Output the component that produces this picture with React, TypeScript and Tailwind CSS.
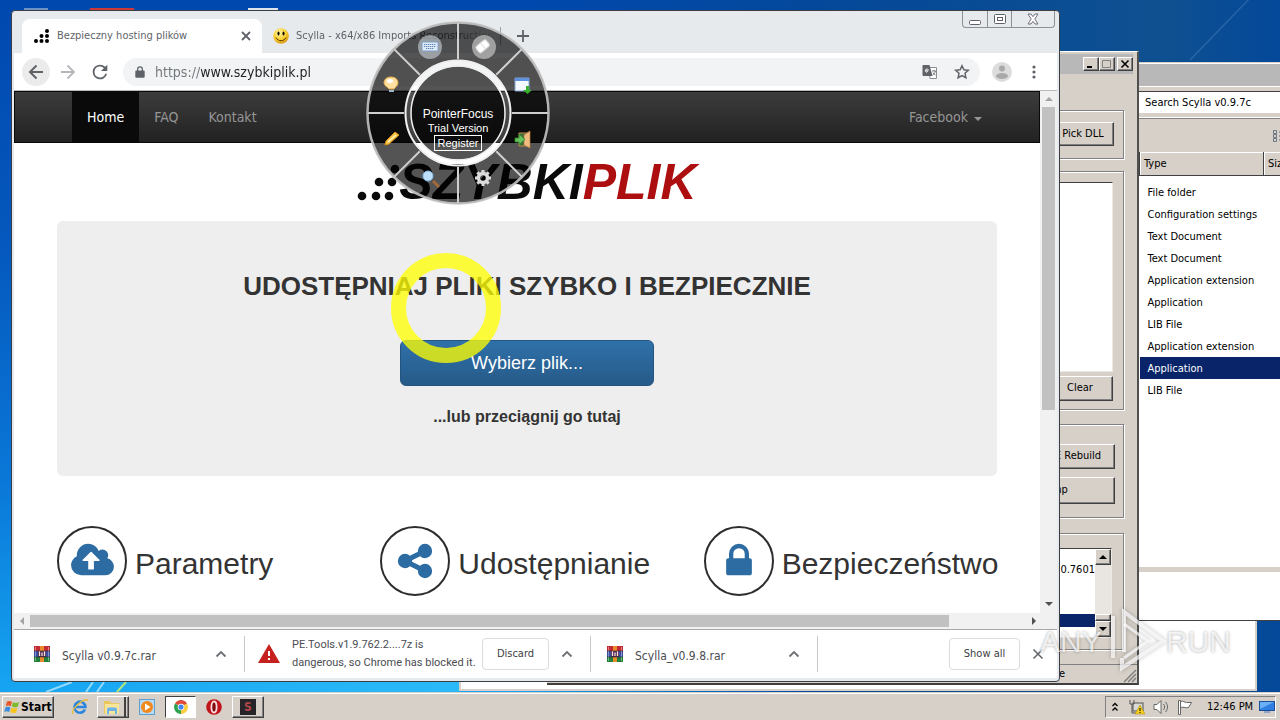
import type { ReactNode } from "react";

const UI = "font-['DejaVu_Sans_Condensed',Tahoma,sans-serif]";
const BUTTON_3D =
  "border border-t-white border-l-white border-r-[#404040] border-b-[#404040] bg-[#d6d0c8] shadow-[inset_-1px_-1px_0_#808080]";
const ETCHED = "border border-[#808080] shadow-[1px_1px_0_#fff,inset_1px_1px_0_#fff]";
const SUNKEN = "border border-t-[#404040] border-l-[#404040] border-r-[#ece9e2] border-b-[#ece9e2] bg-white";

/* ---------- Explorer window ---------- */

const fileTypes = [
  "File folder",
  "Configuration settings",
  "Text Document",
  "Text Document",
  "Application extension",
  "Application",
  "LIB File",
  "Application extension",
  "Application",
  "LIB File",
];

function ExplorerWindow() {
  return (
    <section
      aria-label="Scylla v0.9.7c folder"
      className={`absolute top-[62px] left-[900px] flex h-[559px] w-[480px] flex-col border-y border-t-[#d6d0c8] border-b-[#404040] bg-[#d6d0c8] pl-[239px] text-[11px] text-black ${UI}`}
    >
      <div className="h-[23px] border-t border-white bg-[#b8b8b8]" />
      <div className="flex h-8 items-center border-y border-t-white border-b-white">
        <input
          aria-label="Search"
          defaultValue="Search Scylla v0.9.7c"
          className="h-[22px] w-full border-t border-[#404040] bg-white px-[6px] outline-none"
        />
      </div>
      <div className="flex h-[34px] items-center border-t border-[#808080] pl-[133px]">
        <svg viewBox="0 0 16 14" className="h-[14px] w-4" fill="none" stroke="#6b7785">
          <path d="M1.500 1.500h3v3h-3zM1.500 5.500h3v3h-3zM1.500 9.500h3v3h-3zM7 3h8M7 7h8M7 11h8" />
        </svg>
      </div>
      <div className="h-[415px] bg-white">
        <table className="w-full border-collapse">
          <thead>
            <tr className="h-[23px] border-b border-[#404040] bg-[#d6d0c8] text-left">
              <th className="w-[124px] border-x border-l-[#404040] border-r-[#404040] pt-[2px] pl-1 font-normal shadow-[inset_1px_1px_0_#fff]">
                Type
              </th>
              <th className="pt-[2px] pl-1 font-normal shadow-[inset_1px_1px_0_#fff]">Size</th>
            </tr>
            <tr className="h-[6px]" />
          </thead>
          <tbody>
            {fileTypes.map((t, i) => (
              <tr key={i} className={i === 8 ? "h-[22px] bg-[#0a246a] text-white" : "h-[22px]"}>
                <td className="pt-[2px] pb-0 pl-2 whitespace-nowrap">{t}</td>
                <td />
              </tr>
            ))}
          </tbody>
        </table>
      </div>
      <div className="h-[5px]" />
      <div className="flex-1 bg-white" />
    </section>
  );
}

/* ---------- Scylla window ---------- */

function TitleButton({ label, children }: { label: string; children: ReactNode }) {
  return (
    <button aria-label={label} className={`flex h-[14px] w-4 items-center justify-center ${BUTTON_3D}`}>
      <svg viewBox="0 0 12 10" className="h-[10px] w-3" fill="none" stroke="#000">
        {children}
      </svg>
    </button>
  );
}

function ScyllaWindow() {
  return (
    <section
      aria-label="Scylla"
      className={`absolute top-[51px] left-[547px] flex h-[634px] w-[592px] flex-col border-t border-r-2 border-b-2 border-t-white border-r-[#505050] border-b-[#404040] bg-[#d6d0c8] px-1 pt-[2px] text-[11px] text-black ${UI}`}
    >
      <div className="flex h-5 items-center justify-end bg-[#b8b8b8]">
        <TitleButton label="Minimize">
          <path d="M2 8h5" strokeWidth="2" />
        </TitleButton>
        <TitleButton label="Maximize">
          <path d="M1.500 1.500h8v7h-8z" stroke="#808080" />
        </TitleButton>
        <div className="w-[2px]" />
        <TitleButton label="Close">
          <path d="M2.500 1.500l7 7M9.500 1.500l-7 7" strokeWidth="1.600" />
        </TitleButton>
      </div>
      <div className="flex flex-col pt-[36px] pr-[9px] pl-2">
        <div className={`flex h-[49px] justify-end pt-[11px] pr-[9px] ${ETCHED}`}>
          <button className={`h-6 w-[62px] ${BUTTON_3D}`}>Pick DLL</button>
        </div>
        <div className={`mt-3 flex h-[239px] flex-col items-end pt-[10px] pr-[10px] ${ETCHED}`}>
          <div className={`h-[190px] w-full ${SUNKEN}`} />
          <button className={`mt-1 h-[25px] w-[66px] ${BUTTON_3D}`}>Clear</button>
        </div>
        <div className={`mt-[14px] flex h-[94px] flex-col items-end pt-[19px] pr-2 ${ETCHED}`}>
          <button className={`h-[25px] w-20 ${BUTTON_3D}`}>PE Rebuild</button>
          <button className={`mt-2 h-[27px] w-[124px] ${BUTTON_3D}`}>Dump</button>
        </div>
        <div className={`mt-[15px] h-[117px] pt-[14px] pr-[11px] ${ETCHED}`}>
          <div className={`flex h-[90px] ${SUNKEN}`}>
            <div className="flex flex-1 flex-col pt-[13px]">
              <p className="h-4 text-right">0.7601</p>
              <div className="mt-auto mb-[10px] h-[13px] bg-[#0a246a]" />
            </div>
            <div className="flex w-4 flex-col justify-between bg-[#e9e6e1]">
              <div className={`flex h-4 items-center justify-center ${BUTTON_3D}`}>
                <svg viewBox="0 0 8 4" className="h-1 w-2"><path d="M0 4L4 0L8 4Z" /></svg>
              </div>
              <div>
                <div className={`h-[7px] ${BUTTON_3D}`} />
                <div className={`flex h-4 items-center justify-center ${BUTTON_3D}`}>
                  <svg viewBox="0 0 8 4" className="h-1 w-2"><path d="M0 0L4 4L8 0Z" /></svg>
                </div>
              </div>
            </div>
          </div>
        </div>
      </div>
      <div className="-mx-1 mt-auto flex h-[19px] items-center justify-end border-t border-[#808080]">
        <span className="pr-[58px]">e</span>
        <svg viewBox="0 0 14 14" className="h-[14px] w-[14px] self-end" stroke="#808080" strokeWidth="1.500">
          <path d="M1 13L13 1M5 13L13 5M9 13L13 9" />
        </svg>
      </div>
    </section>
  );
}

/* ---------- Chrome window ---------- */

function DotsLogo() {
  return (
    <svg viewBox="0 0 16 14" className="h-[14px] w-4">
      {[[2, 12], [7.500, 12], [13, 12], [7.500, 7], [13, 7], [13, 2]].map(([x, y]) => (
        <circle key={`${x}-${y}`} cx={x} cy={y} r="2" />
      ))}
    </svg>
  );
}

function Smiley() {
  return (
    <svg viewBox="0 0 16 16" className="h-4 w-4 shrink-0">
      <defs>
        <radialGradient id="smile" cx=".4" cy=".3" r=".7">
          <stop offset="0" stopColor="#fff3a0" />
          <stop offset=".6" stopColor="#f8cf33" />
          <stop offset="1" stopColor="#dd9a14" />
        </radialGradient>
      </defs>
      <circle cx="8" cy="8" r="7.800" fill="url(#smile)" />
      <ellipse cx="5.500" cy="5.500" rx="1" ry="2" />
      <ellipse cx="10.500" cy="5.500" rx="1" ry="2" />
      <path d="M3 9.500c2 4.300 8 4.300 10 0" fill="none" stroke="#5b3a00" />
    </svg>
  );
}

function TabStrip() {
  return (
    <div className="flex h-[42px] items-end pt-2 pl-[10px] text-[11px] text-[#5f6368]">
      <div className="flex h-[34px] w-60 shrink-0 items-center rounded-t-lg bg-white pr-[10px] pl-3">
        <DotsLogo />
        <span className="ml-[7px] flex-1 whitespace-nowrap">Bezpieczny hosting plików</span>
        <button aria-label="Close tab">
          <svg viewBox="0 0 12 12" className="h-3 w-3" stroke="#5f6368" strokeWidth="1.800">
            <path d="M2 2l8 8M10 2l-8 8" />
          </svg>
        </button>
      </div>
      <div className="flex h-[34px] w-[238px] shrink-0 items-center pl-[11px]">
        <Smiley />
        <span className="ml-[7px] w-[200px] overflow-hidden whitespace-nowrap [mask-image:linear-gradient(90deg,#000_80%,transparent)]">
          Scylla - x64/x86 Imports Reconstruction
        </span>
      </div>
      <div className="mb-2 h-[18px] w-px bg-[#9aa0a6]" />
      <button aria-label="New tab" className="ml-[14px] flex h-[34px] items-center">
        <svg viewBox="0 0 16 16" className="h-4 w-4" stroke="#5f6368" strokeWidth="1.800">
          <path d="M8 2v12M2 8h12" />
        </svg>
      </button>
      <div className="-mt-2 mr-1 ml-auto flex h-[17px] self-start rounded-b border border-t-0 border-[#8d9094]">
        <button aria-label="Minimize" className="flex w-6 items-center justify-center">
          <svg viewBox="0 0 12 12" className="h-3 w-3" fill="#fff" stroke="#63606e">
            <rect x=".5" y="7.500" width="11" height="4" rx="1" />
          </svg>
        </button>
        <button aria-label="Restore" className="flex w-[25px] items-center justify-center border-x border-[#8d9094]">
          <svg viewBox="0 0 12 12" className="h-3 w-3" fill="#fff" stroke="#63606e">
            <rect x=".5" y="1.500" width="11" height="9" rx="1" />
            <rect x="3.500" y="4.500" width="5" height="3" />
          </svg>
        </button>
        <button aria-label="Close" className="flex w-[42px] items-center justify-center">
          <svg viewBox="0 0 12 12" className="h-3 w-3" fill="#fff" stroke="#63606e" strokeWidth=".9">
            <path d="M1 1h3l2 2.700L8 1h3L7.800 6 11 11H8L6 8.300 4 11H1l3.200-5z" />
          </svg>
        </button>
      </div>
    </div>
  );
}

function Toolbar() {
  return (
    <div className="mx-[2px] flex h-[38px] items-center border-b border-[#b9bbbe] bg-white pl-2 text-[#5f6368]">
      <button aria-label="Back" className="flex h-7 w-7 items-center justify-center rounded-full bg-[#ebebec]">
        <svg viewBox="0 0 16 16" className="h-4 w-4" fill="none" stroke="currentColor" strokeWidth="2">
          <path d="M15 8H2M8.500 1.500L2 8l6.500 6.500" />
        </svg>
      </button>
      <button aria-label="Forward" className="ml-1 flex h-7 w-7 items-center justify-center">
        <svg viewBox="0 0 16 16" className="h-4 w-4" fill="none" stroke="#b4b6b9" strokeWidth="1.800">
          <path d="M1 8h13M7.500 1.500L14 8l-6.500 6.500" />
        </svg>
      </button>
      <button aria-label="Reload" className="ml-1 flex h-7 w-7 items-center justify-center">
        <svg viewBox="0 0 24 24" className="h-[22px] w-[22px]" fill="currentColor">
          <path d="M17.650 6.350A7.960 7.960 0 0 0 12 4a8 8 0 1 0 7.730 10h-2.080A6 6 0 1 1 12 6c1.660 0 3.140.69 4.220 1.780L13 11h7V4l-2.350 2.350z" />
        </svg>
      </button>
      <div className="ml-[9px] flex h-[28px] flex-1 items-center rounded-full bg-[#f1f3f4] pr-[10px] pl-3">
        <svg viewBox="0 0 10 12" className="h-3 w-[10px]" fill="currentColor">
          <path d="M2 4.500V3.200a3 3 0 0 1 6 0v1.300h.8c.5 0 .9.400.9.900v5.400c0 .5-.4.900-.9.900H1.200a.9.900 0 0 1-.9-.9V5.400c0-.5.4-.9.900-.9zm1.300 0h3.400V3.200a1.700 1.700 0 0 0-3.400 0z" />
        </svg>
        <input
          aria-label="Address"
          defaultValue="https://www.szybkiplik.pl"
          className="ml-[10px] h-6 min-w-0 flex-1 bg-[linear-gradient(90deg,#70757a_46px,#202124_46px)] bg-clip-text text-sm text-transparent caret-black outline-none"
        />
        <button aria-label="Translate">
          <svg viewBox="0 0 16 16" className="h-4 w-4">
            <path d="M7 3.500h7.500v11H8z" fill="#fff" stroke="#8a8d91" />
            <path d="M1.500 1h6l3 11h-9C1 12 .5 11.500.5 11V2c0-.6.4-1 1-1z" fill="#5f6368" />
            <path d="M7 6H4.700v1.300h1c-.2.700-.7 1-1.200 1A1.700 1.700 0 1 1 5.600 5" fill="none" stroke="#fff" strokeWidth=".9" />
            <path d="M10 7h4M12 6v1M13.300 7c-.4 2-1.400 3.300-2.600 4M11 8.500c.6 1.200 1.400 2 2.500 2.700" fill="none" stroke="#5f6368" strokeWidth=".8" />
          </svg>
        </button>
        <button aria-label="Bookmark" className="ml-4">
          <svg viewBox="0 0 16 16" className="h-4 w-4" fill="none" stroke="currentColor" strokeWidth="1.500">
            <path d="M8 1.800l1.900 4 4.400.5-3.300 3 .9 4.400L8 11.500l-3.900 2.200.9-4.400-3.300-3 4.400-.5z" />
          </svg>
        </button>
      </div>
      <button aria-label="Profile" className="ml-3">
        <svg viewBox="0 0 20 20" className="h-5 w-5">
          <circle cx="10" cy="10" r="10" fill="#dcdcdc" />
          <circle cx="10" cy="6.500" r="3" fill="#a9a9a9" />
          <ellipse cx="10" cy="14" rx="6" ry="3" fill="#a9a9a9" />
        </svg>
      </button>
      <button aria-label="Menu" className="mr-4 ml-[15px]">
        <svg viewBox="0 0 14 14" className="h-[14px] w-[14px]" fill="currentColor">
          <circle cx="7" cy="2" r="1.600" />
          <circle cx="7" cy="7" r="1.600" />
          <circle cx="7" cy="12" r="1.600" />
        </svg>
      </button>
    </div>
  );
}

const features = [
  {
    name: "Parametry",
    box: "-64 0 1920 1792",
    size: "h-10 w-[43px]",
    d: "M1216 864q0-14-9-23l-352-352q-9-9-23-9t-23 9l-351 351q-10 12-10 24 0 14 9 23t23 9h224v352q0 13 9.500 22.500t22.500 9.500h192q13 0 22.500-9.500t9.500-22.500V896h224q13 0 22.500-9.500t9.500-22.500zm640 288q0 159-112.500 271.500T1472 1536H384q-185 0-316.500-131.500T-64 1088q0-130 70-240t188-165q-2-30-2-43 0-212 150-362t362-150q156 0 285.500 87t188.500 231q71-62 166-62 106 0 181 75t75 181q0 76-41 138 130 31 213.500 135.500T1856 1152z",
  },
  {
    name: "Udostępnianie",
    box: "0 0 1792 1792",
    size: "h-10 w-10",
    d: "M1344 1024q133 0 226.500 93.500t93.500 226.500-93.500 226.500-226.500 93.500-226.500-93.500-93.500-226.500q0-12 2-34l-360-180q-92 86-218 86-133 0-226.500-93.500t-93.500-226.500 93.500-226.500 226.500-93.500q126 0 218 86l360-180q-2-22-2-34 0-133 93.500-226.500t226.500-93.500 226.500 93.500 93.500 226.500-93.500 226.500-226.500 93.500q-126 0-218-86l-360 180q2 22 2 34t-2 34l360 180q92-86 218-86z",
  },
  {
    name: "Bezpieczeństwo",
    box: "0 0 1792 1792",
    size: "h-10 w-10",
    d: "M640 768h512V576q0-106-75-181t-181-75-181 75-75 181v192zm832 96v576q0 40-28 68t-68 28H416q-40 0-68-28t-28-68V864q0-40 28-68t68-28h32V576q0-184 132-316t316-132 316 132 132 316v192h32q40 0 68 28t28 68z",
  },
];

function WebPage() {
  return (
    <div className="flex-1 overflow-hidden bg-white">
      <nav className="flex h-[52px] items-stretch border border-[#090909] bg-linear-to-b from-[#3c3c3c] to-[#222] pl-[57px] text-sm text-[#969696]">
        <a href="#home" className="flex items-center bg-[#0a0a0a] px-[15px] text-white">Home</a>
        <a href="#faq" className="flex items-center px-[15px]">FAQ</a>
        <a href="#kontakt" className="flex items-center px-[15px]">Kontakt</a>
        <a href="#facebook" className="mr-[57px] ml-auto flex items-center gap-[6px]">
          Facebook
          <svg viewBox="0 0 8 4" className="mt-1 h-1 w-2" fill="currentColor"><path d="M0 0h8L4 4z" /></svg>
        </a>
      </nav>
      <main className="mx-[43px] font-['Liberation_Sans',Arial,sans-serif] text-[#333]">
        <h1 className="flex h-[78px] items-center justify-center text-[50px] leading-none font-bold italic">
          <svg viewBox="0 0 42 40" className="h-10 w-[42px]" fill="#0a0a0a">
            {[[5, 34], [19, 34], [32, 34], [22, 20], [35, 20], [38, 7]].map(([x, y]) => (
              <circle key={`${x}-${y}`} cx={x} cy={y} r="4.300" />
            ))}
          </svg>
          <span className="text-[#0a0a0a]">SZYBKI</span>
          <span className="text-[#ad0f10]">PLIK</span>
        </h1>
        <div className="flex h-[255px] flex-col items-center rounded-md bg-[#eee] pt-[49px] font-bold">
          <h2 className="text-[26px] leading-8">UDOSTĘPNIAJ PLIKI SZYBKO I BEZPIECZNIE</h2>
          <button className="mt-[38px] h-[46px] w-[254px] rounded-md border border-[#245580] bg-linear-to-b from-[#2f71aa] to-[#265a88] text-lg font-normal text-white">
            Wybierz plik...
          </button>
          <p className="mt-[19px] text-base">...lub przeciągnij go tutaj</p>
        </div>
        <div className="mt-[50px] grid grid-cols-3 gap-[30px]">
          {features.map((f) => (
            <h3 key={f.name} className="flex items-center gap-2 text-[30px] whitespace-nowrap">
              <span className="flex h-[70px] w-[70px] shrink-0 items-center justify-center rounded-full border-2 border-[#2d2d2d]">
                <svg viewBox={f.box} className={f.size} fill="#2d6ca2"><path d={f.d} /></svg>
              </span>
              <span className="pt-1">{f.name}</span>
            </h3>
          ))}
        </div>
      </main>
    </div>
  );
}

function Chevron() {
  return (
    <button aria-label="More actions" className="flex h-6 w-6 shrink-0 items-center justify-center">
      <svg viewBox="0 0 12 8" className="h-2 w-3" fill="none" stroke="#6e7175" strokeWidth="1.800">
        <path d="M1.500 6.500L6 2l4.500 4.500" />
      </svg>
    </button>
  );
}

function RarIcon() {
  return (
    <svg viewBox="0 0 16 16" className="h-4 w-4 shrink-0">
      <path d="M0 0h16v5H0z" fill="#c22a35" />
      <path d="M0 5h16v6H0z" fill="#3a4fa3" />
      <path d="M0 11h16v5H0z" fill="#22803a" />
      <path d="M6 0h4v5H6zM6 11h4v5H6z" fill="#e98a2b" />
      <path d="M4 5h8v6H4z" fill="#5a2c5d" />
      <path d="M5.500 5v5M8 6.500V10M10.500 5v5" stroke="#f5e9d8" strokeWidth="1.200" />
      <path d="M1.500 1v14M14.500 1v14" stroke="#fff" strokeOpacity=".4" />
      <path d="M0 5h16M0 11h16" stroke="#222" strokeOpacity=".5" />
    </svg>
  );
}

function DownloadShelf() {
  const card = "h-8 rounded border border-[#dadce0] bg-white text-[11px] text-[#3c4043]";
  return (
    <div className="mx-[2px] flex h-[49px] shrink-0 items-center border-t border-[#a9a9a9] bg-white text-[#4a4d51]">
      <div className="flex h-9 w-[231px] items-center border-r border-[#c8c8c8] pr-[11px] pl-5 text-xs">
        <RarIcon />
        <span className="ml-3 flex-1 pt-1">Scylla v0.9.7c.rar</span>
        <Chevron />
      </div>
      <div className="flex h-9 w-[346px] items-center border-r border-[#c8c8c8] pr-[11px] pl-[13px]">
        <svg viewBox="0 0 22 20" className="h-5 w-[22px] shrink-0">
          <path d="M11 0L22 19H0z" fill="#c5221f" />
          <path d="M10 7h2v5h-2zM10 14h2v2h-2z" fill="#fff" />
        </svg>
        <p className="ml-3 w-[190px] shrink-0 font-['Roboto',sans-serif] text-[11px] leading-[18px] whitespace-nowrap">
          PE.Tools.v1.9.762.2....7z is
          <br />
          dangerous, so Chrome has blocked it.
        </p>
        <button className={`mr-[6px] w-[67px] shrink-0 ${card}`}>Discard</button>
        <Chevron />
      </div>
      <div className="flex h-9 w-[227px] items-center border-r border-[#c8c8c8] pr-[11px] pl-4 text-xs">
        <RarIcon />
        <span className="ml-3 flex-1 pt-1">Scylla_v0.9.8.rar</span>
        <Chevron />
      </div>
      <button className={`ml-auto w-[71px] ${card}`}>Show all</button>
      <button aria-label="Close downloads bar" className="mr-[13px] ml-3">
        <svg viewBox="0 0 12 12" className="h-3 w-3" stroke="#5f6368" strokeWidth="1.500">
          <path d="M1.500 1.500l9 9M10.500 1.500l-9 9" />
        </svg>
      </button>
    </div>
  );
}

function ChromeWindow() {
  return (
    <section
      aria-label="Chrome"
      className={`absolute top-[10px] left-[11px] flex h-[672px] w-[1049px] flex-col rounded-t rounded-b-sm border border-[#3b3f45] bg-[#e7eaed] ${UI}`}
    >
      <TabStrip />
      <Toolbar />
      <div className="mx-[2px] flex min-h-0 flex-1 bg-white">
        <WebPage />
        <div className="flex w-[17px] flex-col items-center bg-[#f1f1f1]">
          <svg viewBox="0 0 8 4" className="my-[6px] h-1 w-2" fill="#a3a3a3"><path d="M0 4L4 0L8 4Z" /></svg>
          <div className="h-[303px] w-[13px] bg-[#c1c1c1]" />
          <svg viewBox="0 0 8 4" className="mt-auto mb-[7px] h-1 w-2" fill="#505050"><path d="M0 0L4 4L8 0Z" /></svg>
        </div>
      </div>
      <div className="mx-[2px] flex h-4 shrink-0 items-center bg-[#f1f1f1] pl-[6px]">
        <svg viewBox="0 0 4 8" className="h-2 w-1" fill="#a3a3a3"><path d="M4 0L0 4L4 8Z" /></svg>
        <div className="ml-[6px] h-3 w-[919px] bg-[#c1c1c1]" />
        <svg viewBox="0 0 4 8" className="mr-[21px] ml-auto h-2 w-1" fill="#505050"><path d="M0 0L4 4L0 8Z" /></svg>
      </div>
      <DownloadShelf />
      <div className="h-[3px] shrink-0" />
    </section>
  );
}

/* ---------- Pointer overlays ---------- */

function PointerMenu() {
  const spokes = [0, 45, 90, 135, 180, 225, 270, 315];
  return (
    <div className="absolute top-[21px] left-[366px] h-[184px] w-[184px] font-['Liberation_Sans',Arial,sans-serif] text-white">
      <svg viewBox="-92 -92 184 184" className="h-full w-full">
        <circle r="72" fill="none" stroke="#000" strokeOpacity=".67" strokeWidth="38" />
        <circle r="90.500" fill="none" stroke="#c4c4c4" strokeOpacity=".9" strokeWidth="2.500" />
        {spokes.map((a) => (
          <path key={a} d="M54 0H90" transform={`rotate(${a})`} stroke="#cfcfcf" strokeWidth="2" />
        ))}
        <circle r="46.500" fill="#000" fillOpacity=".67" />
        <circle r="50" fill="none" stroke="#fff" strokeOpacity=".12" strokeWidth="7" />
        <circle r="52.500" fill="none" stroke="#efefef" strokeWidth="2" />
        <circle r="47" fill="none" stroke="#efefef" strokeWidth="1.500" />

        <circle cx="-28" cy="-66" r="12" fill="#c3c9d0" fillOpacity=".65" />
        <g transform="translate(-36 -71)">
          <rect width="16" height="9" rx="1" fill="#dfeaf7" stroke="#7ea0cc" />
          <path d="M2 2.500h12M2 4.500h12M4 6.500h8" stroke="#5e84b8" strokeDasharray="1.300 .7" />
        </g>
        <circle cx="26" cy="-66" r="12" fill="#bcbcbc" fillOpacity=".75" />
        <g transform="translate(25 -67) rotate(-40)">
          <rect x="-7" y="-4" width="13" height="8" rx="2" fill="#fff" stroke="#d8d8d8" />
          <path d="M0-4v8" stroke="#ddd" />
        </g>

        <path d="M-67-36c-5 0-7 3-7 6 0 3 4 4 5 6h5c1-2 4-3 4-6 0-3-2-6-7-6z" fill="#ffe0a0" stroke="#e2a847" />
        <path d="M-69-23h5v2h-5z" fill="#9fb4cc" />
        <ellipse cx="-68" cy="-32" rx="3" ry="2" fill="#fff" />

        <path d="M57-35h14v13H57z" fill="#f4f8ff" stroke="#84a5d5" />
        <path d="M57-35h14v3H57z" fill="#5f94dc" />
        <path d="M66-22h3v-4h3v4h3l-4.500 4z" fill="#37b12c" transform="translate(-1 -1)" />

        <path d="M-73 32l1-4 9-9 4 3-10 9z" fill="#f7c548" stroke="#d98e1b" />
        <path d="M-70 29l8-7" stroke="#fff0b5" strokeWidth="1.500" />

        <path d="M61 20h10v13H61z" fill="#3e6c39" stroke="#c58a4a" />
        <path d="M66 22l6-4v17l-6-3z" fill="#eebb80" stroke="#b97d3e" strokeWidth=".7" />
        <path d="M57 25h4v-4l6 5.500-6 5V29h-4z" fill="#67c160" stroke="#2d8628" strokeWidth=".8" />

        <path d="M-25 68l6 6" stroke="#a06b3c" strokeWidth="3" />
        <circle cx="-30" cy="63" r="5" fill="#bfe0fb" stroke="#87b9e4" />

        <circle cx="25" cy="65" r="4.500" fill="none" stroke="#dcdcdc" strokeWidth="3.500" />
        {spokes.map((a) => (
          <path key={a} d="M5 0H8" transform={`translate(25 65) rotate(${a})`} stroke="#dcdcdc" strokeWidth="3" />
        ))}
      </svg>
      <div className="absolute inset-x-0 top-[86px] flex flex-col items-center text-[12px] leading-[14px]">
        <span>PointerFocus</span>
        <span className="text-[11px]">Trial Version</span>
        <button className="border border-white px-[3px] text-[11px] leading-[14px]">Register</button>
      </div>
    </div>
  );
}

function Watermark() {
  return (
    <div className="pointer-events-none absolute top-[608px] left-[1040px] flex h-[66px] w-[200px] items-center font-['Liberation_Sans',sans-serif] text-[30px] text-white/75 [text-shadow:0_0_3px_rgba(0,0,0,.35)]">
      <span className="w-[70px]">ANY</span>
      <svg viewBox="0 0 56 66" className="h-[66px] w-[56px] drop-shadow-[0_0_2px_rgba(0,0,0,.35)]" fill="none" stroke="#fff" strokeOpacity=".7" strokeWidth="4">
        <path d="M3 8v42M14 44V4L53 33L12 60V50" />
        <path d="M14 16L38 33L14 50" strokeWidth="3" />
      </svg>
      <span>RUN</span>
    </div>
  );
}

/* ---------- Taskbar ---------- */

function Taskbar() {
  return (
    <footer className={`z-10 flex h-7 shrink-0 items-center border-t border-[#d6d0c8] bg-[#d6d0c8] pr-1 pl-[2px] text-[11px] text-black shadow-[inset_0_1px_0_#fff] ${UI}`}>
      <button className={`flex h-[22px] w-[52px] items-center gap-px pl-px text-xs font-bold ${BUTTON_3D}`}>
        <svg viewBox="0 0 16 14" className="h-[14px] w-4 shrink-0">
          <path d="M3 1.500c2-1 3.500-.5 5 .3L6.800 6.300C5 5.500 4 5.300 1.800 6.200z" fill="#e8562a" />
          <path d="M9 2.200c2 .9 3.500 1 6 0l-1.300 4.600c-2 .9-4 .7-5.900-.2z" fill="#7fba2c" />
          <path d="M1.500 7.300c2-.9 3.200-.6 5 .1L5.200 12c-2-.8-3-.9-5 0z" fill="#3a8ee0" />
          <path d="M7.500 7.800c2 .9 3.500 1 5.900.1L12.100 12.500c-2 .9-4 .7-5.800-.2z" fill="#f8c41c" />
        </svg>
        <span>Start</span>
      </button>
      <button aria-label="Internet Explorer" className="ml-[17px] flex h-[22px] w-[18px] items-center">
        <svg viewBox="0 0 18 18" className="h-[18px] w-[18px]" fill="none">
          <path d="M14 11.500A5.500 5.500 0 1 1 14.500 9H5" stroke="#2b86dc" strokeWidth="2.600" />
          <path d="M2 16C-1 12 13-1 17 2.500" stroke="#e8b93a" strokeWidth="1.300" />
        </svg>
      </button>
      <button aria-label="Explorer" className={`ml-2 flex h-[22px] w-8 items-center pl-[5px] ${BUTTON_3D}`}>
        <svg viewBox="0 0 18 16" className="h-4 w-[18px]">
          <path d="M1 2h6l1 2h8v11H1z" fill="#e9c75b" />
          <path d="M2 5h14v10H2z" fill="#f7e59a" />
          <path d="M4 15V10.500c0-1.500 1-2 2-2h6c1 0 2 .5 2 2V15h-2v-3H6v3z" fill="#6db3e6" />
        </svg>
        <span className="ml-[3px] h-full w-[2px] bg-[#404040]" />
      </button>
      <button aria-label="Media Player" className="ml-[10px] flex h-[22px] w-4 items-center">
        <svg viewBox="0 0 16 16" className="h-4 w-4">
          <rect x=".5" y=".5" width="15" height="15" fill="#b9d9f2" stroke="#5f9fd0" />
          <circle cx="8" cy="8" r="6" fill="#f08a1d" />
          <path d="M6 4.500L11.500 8L6 11.500z" fill="#fff" />
        </svg>
      </button>
      <button aria-label="Chrome" className="ml-[10px] flex h-[22px] w-[31px] items-center justify-center border border-t-[#404040] border-l-[#404040] border-r-white border-b-white bg-white">
        <svg viewBox="0 0 16 16" className="h-[14px] w-[14px]">
          <path d="M8 8L1.100 4A8 8 0 0 1 14.900 4z" fill="#df4a3a" />
          <path d="M8 8L14.900 4A8 8 0 0 1 8 16z" fill="#fccd3e" />
          <path d="M8 8V16A8 8 0 0 1 1.100 4z" fill="#2da34e" />
          <circle cx="8" cy="8" r="3.800" fill="#fff" />
          <circle cx="8" cy="8" r="2.900" fill="#4484f2" />
        </svg>
      </button>
      <button aria-label="Opera" className="ml-[10px] flex h-[22px] w-4 items-center">
        <svg viewBox="0 0 16 16" className="h-4 w-4">
          <circle cx="8" cy="8" r="7.800" fill="#c0141a" />
          <ellipse cx="8" cy="8" rx="2.600" ry="5.500" fill="#7e0a0f" stroke="#f6dcdc" strokeWidth="1.800" />
        </svg>
      </button>
      <button aria-label="Scylla" className={`ml-[10px] flex h-[22px] w-8 items-center justify-center ${BUTTON_3D}`}>
        <span className="flex h-4 w-4 items-center justify-center bg-[#262426] text-xs font-bold text-[#b3474b]">S</span>
      </button>
      <div className="ml-auto flex h-[22px] w-[171px] items-center border border-t-[#808080] border-l-[#808080] border-r-white border-b-white pl-[5px]">
        <svg viewBox="0 0 8 10" className="h-[10px] w-2" fill="none" stroke="#000" strokeWidth="1.300">
          <path d="M1.500 4L4 1.500L6.500 4M1.500 8.500L4 6l2.500 2.500" />
        </svg>
        <svg viewBox="0 0 16 16" className="ml-[10px] h-4 w-4">
          <rect x="4" y="4" width="10" height="8" fill="#d8d8d8" stroke="#555" />
          <path d="M1 1v4h4V1M3 5v9h5" fill="none" stroke="#555" />
          <path d="M11 6l5 9H6z" fill="#f6cf1f" stroke="#a88300" strokeWidth=".5" />
          <path d="M11 9v3M11 13v1" stroke="#000" />
        </svg>
        <svg viewBox="0 0 16 16" className="ml-2 h-4 w-4" fill="#fff" stroke="#666">
          <path d="M1 5.500h3l4-4v13l-4-4H1z" />
          <path d="M10.500 5c1.500 2 1.500 4 0 6M12.500 3c2.700 3 2.700 7 0 10" fill="none" />
        </svg>
        <svg viewBox="0 0 16 16" className="ml-2 h-4 w-4" fill="#fff" stroke="#666">
          <path d="M1.500 1.500h2v14h-2zM3.500 2.500c3-1 4 1 6 1h5l-3 5c-3 1-4-1-8 0z" />
        </svg>
        <time className="ml-[14px] pt-px whitespace-nowrap">12:46 PM</time>
        <svg viewBox="0 0 16 12" className="ml-auto h-3 w-4">
          <rect x=".5" y=".5" width="15" height="9" fill="#2f7fe0" stroke="#1b4e9c" />
          <path d="M1 1h14L1 8z" fill="#6bb0f5" />
          <path d="M5 10h6v2H5z" fill="#8fa7c5" />
        </svg>
      </div>
    </footer>
  );
}

export default function App() {
  return (
    <div className="flex h-screen flex-col overflow-hidden">
      <div className="relative min-h-0 flex-1 overflow-hidden bg-[linear-gradient(180deg,#0048ae_0%,#0558bd_35%,#0a78d8_70%,#16a5f2_100%)]">
        {/* right half of the wallpaper stays dark blue */}
        <div className="absolute inset-y-0 right-0 w-3/5 bg-[linear-gradient(90deg,rgba(0,75,160,0),#03489a_40%,#0f5090_85%,#04489a)]" />
        <svg viewBox="0 0 200 60" className="absolute top-0 left-[1080px] h-[60px] w-[200px]" stroke="#6a9dcc" strokeOpacity=".3" strokeWidth="1.500">
          <path d="M110 60L172 -4" />
        </svg>
        <div className="absolute top-2 left-[24px] h-[2px] w-6 bg-[#6d93c4]" />
        <div className="absolute top-2 left-[90px] h-[2px] w-[44px] bg-[#cb3a34]" />
        <div className="absolute top-2 left-[248px] h-[2px] w-[30px] bg-[#dfe6ee]" />

        <div className="absolute bottom-0 left-0 h-[10px] w-[459px] bg-linear-to-r from-transparent to-[#2bbaf7]" />
        <svg viewBox="0 0 300 10" className="absolute bottom-0 left-0 h-[10px] w-[300px]" stroke="#c9f0ff" strokeWidth="2">
          <path d="M46 10L72 0M86 10L93 0M97 10L104 0" strokeOpacity=".7" />
          <path d="M117 10L126 0" stroke="#b5e87a" />
        </svg>
        <div className="absolute top-[560px] left-[459px] h-[131px] w-[798px] border-x-2 border-b-2 border-[#d6d0c8] bg-white" />
        <ExplorerWindow />
        <ScyllaWindow />
        <ChromeWindow />
        <PointerMenu />
        <svg viewBox="0 0 110 110" className="pointer-events-none absolute top-[253px] left-[391px] h-[110px] w-[110px]">
          <circle cx="55" cy="55" r="47.500" fill="none" stroke="#ff0" strokeOpacity=".76" strokeWidth="15" />
        </svg>
        <Watermark />
      </div>
      <Taskbar />
    </div>
  );
}
